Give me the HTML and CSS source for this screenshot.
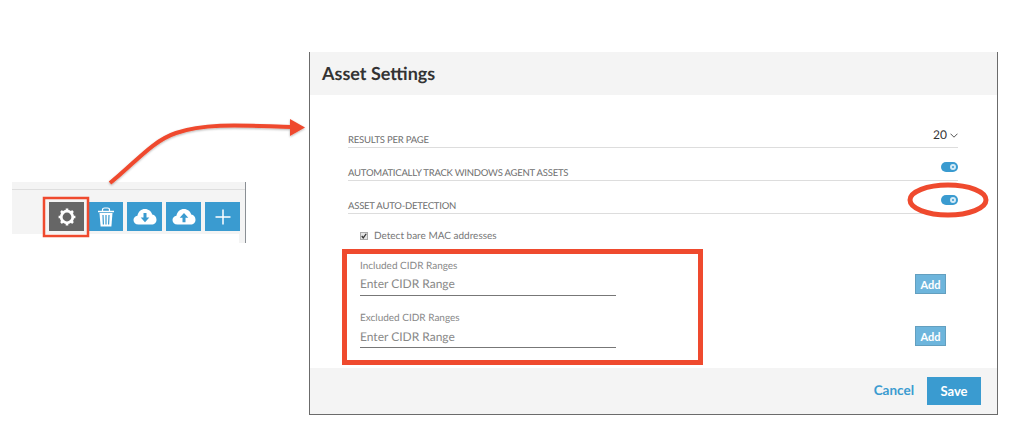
FILE: index.html
```html
<!DOCTYPE html>
<html lang="en">
<head>
    <meta charset="UTF-8">
    <title>Asset Settings</title>
    <link rel="stylesheet" href="styles.css">
</head>
<body>
    <div class="toolbar-crop">
        <div class="toolbar-top"></div>
        <div class="toolbar">
            <button class="tool tool-active">
                <svg width="20" height="20" viewBox="0 0 20 20">
                    <circle cx="10" cy="10" r="5.8" fill="none" stroke="#fff" stroke-width="2.8"/>
                    <path d="M10 1.6v3M10 15.4v3M1.6 10h3M15.4 10h3M4 4l2.100 2.100M13.900 13.900L16 16M4 16l2.100-2.100M13.900 6.100L16 4" stroke="#fff" stroke-width="2.6"/>
                </svg>
            </button>
            <button class="tool">
                <svg width="18" height="20" viewBox="0 0 18 20">
                    <path d="M1 4.5h16" stroke="#fff" stroke-width="1.5"/>
                    <path d="M5.5 4V2.800C5.500 1.800 6.500 1 7.500 1h3c1 0 2 .8 2 1.800V4" fill="none" stroke="#fff" stroke-width="1.2"/>
                    <path d="M2.500 6h13l-1.100 13.500H3.600z" fill="#fff"/>
                    <path d="M6 8l.4 9.500M9 8v9.500M12 8l-.4 9.500" stroke="#3a9bd0" stroke-width="1.2"/>
                </svg>
            </button>
            <button class="tool">
                <svg width="24" height="17" viewBox="0 0 24 17">
                    <path d="M5.500 16.500C2.400 16.500.5 14.500.5 12c0-2.300 1.600-4 3.900-4.300C5.200 3.500 8.200 1 12 1c3.500 0 6.300 2.300 7.200 5.500 2.600.2 4.300 2.600 4.300 5.200 0 2.800-2 4.800-4.900 4.800z" fill="#fff"/>
                    <path d="M10.500 5h3v4.500h2.800L12 14.200 7.700 9.500h2.800z" fill="#3a9bd0"/>
                </svg>
            </button>
            <button class="tool">
                <svg width="24" height="17" viewBox="0 0 24 17">
                    <path d="M5.500 16.500C2.400 16.500.5 14.500.5 12c0-2.300 1.600-4 3.900-4.300C5.200 3.500 8.200 1 12 1c3.500 0 6.300 2.300 7.200 5.500 2.600.2 4.300 2.600 4.300 5.200 0 2.800-2 4.800-4.900 4.800z" fill="#fff"/>
                    <path d="M10.500 14.200h3V9.700h2.800L12 5 7.700 9.700h2.800z" fill="#3a9bd0"/>
                </svg>
            </button>
            <button class="tool">
                <svg width="16" height="16" viewBox="0 0 16 16">
                    <path d="M8 .5v15M.5 8h15" stroke="#fff" stroke-width="1.5"/>
                </svg>
            </button>
        </div>
        <div class="toolbar-under">
            <div class="under-panel"></div>
        </div>
    </div>

    <div class="modal">
        <div class="modal-header">Asset Settings</div>
        <div class="modal-body">
            <div class="setting-row">
                <span class="setting-label">Results per page</span>
                <span class="page-size">20
                    <svg width="8" height="5" viewBox="0 0 8 5"><path d="M.5.7L4 4.2 7.5.7" fill="none" stroke="#555" stroke-width="1"/></svg>
                </span>
            </div>
            <div class="setting-row">
                <span class="setting-label">Automatically track Windows agent assets</span>
                <span class="toggle"></span>
            </div>
            <div class="setting-row">
                <span class="setting-label">Asset auto-detection</span>
                <span class="toggle"></span>
            </div>
            <label class="check-row">
                <span class="check-box">
                    <svg width="8" height="8" viewBox="0 0 8 8"><path d="M1 4l2 2.5L7 1" fill="none" stroke="#333" stroke-width="1.7"/></svg>
                </span>
                Detect bare MAC addresses
            </label>
            <div class="cidr-row">
                <div class="cidr-field">
                    <div class="cidr-label">Included CIDR Ranges</div>
                    <div class="cidr-input">Enter CIDR Range</div>
                </div>
                <button class="add-btn">Add</button>
            </div>
            <div class="cidr-row">
                <div class="cidr-field">
                    <div class="cidr-label">Excluded CIDR Ranges</div>
                    <div class="cidr-input cidr-input-low">Enter CIDR Range</div>
                </div>
                <button class="add-btn">Add</button>
            </div>
        </div>
        <div class="modal-footer">
            <a class="cancel-link">Cancel</a>
            <button class="save-btn">Save</button>
        </div>
    </div>

    <!-- red callouts drawn on top of the screenshot -->
    <svg class="callouts" width="1018" height="442" viewBox="0 0 1018 442">
        <defs>
            <filter id="soft" x="-10%" y="-10%" width="120%" height="130%">
                <feDropShadow dx="0" dy="1" stdDeviation="1" flood-color="#000" flood-opacity="0.3"/>
            </filter>
        </defs>
        <g filter="url(#soft)">
            <path d="M110 183C135 163 152 141 176 133C208 122 250 126 292 127" fill="none" stroke="#ef4a2e" stroke-width="4"/>
            <path d="M290 119L305 127.5L290 136z" fill="#ef4a2e"/>
        </g>
        <rect x="44" y="198" width="44" height="38" fill="none" stroke="#ef4a2e" stroke-width="2.5"/>
        <rect x="344.5" y="251.5" width="356" height="111" fill="none" stroke="#ef4a2e" stroke-width="5"/>
        <ellipse cx="948" cy="200" rx="38" ry="15" fill="none" stroke="#ef4a2e" stroke-width="5"/>
    </svg>
</body>
</html>
```
FILE: styles.css
```css
body {
    margin: 0;
    width: 1018px;
    height: 442px;
    overflow: hidden;
    background: #fff;
    font-family: 'Lato', 'Liberation Sans', sans-serif;
    color: #333;
    text-rendering: geometricPrecision;
}

button {
    font-family: inherit;
    border: none;
    padding: 0;
}

/* left crop of the page toolbar */
.toolbar-crop {
    position: absolute;
    left: 12px;
    top: 182px;
    width: 233px;
    height: 61px;
    border-right: 1px solid #8a8f94;
    display: flex;
    flex-direction: column;
}

.toolbar-top {
    height: 7px;
    background: #f4f4f4;
    border-bottom: 1px solid #dedede;
}

.toolbar {
    height: 44px;
    background: #f4f4f4;
    box-sizing: border-box;
    padding: 12px 5px 0 0;
    display: flex;
    justify-content: flex-end;
    gap: 4px;
}

.tool {
    width: 35px;
    height: 29px;
    background: #3a9bd0;
    display: flex;
    align-items: center;
    justify-content: center;
}

.tool-active {
    background: #666;
}

.toolbar-under {
    flex: 1;
    background: #f4f4f4;
    padding-right: 6px;
}

.under-panel {
    height: 100%;
    background: #fff;
}

/* settings dialog */
.modal {
    position: absolute;
    left: 309px;
    top: 52px;
    width: 689px;
    height: 363px;
    box-sizing: border-box;
    border: 1px solid #6b6b6b;
    border-top: none;
    display: flex;
    flex-direction: column;
}

.modal-header {
    height: 43px;
    background: #f4f4f4;
    padding-left: 12px;
    font-size: 18px;
    font-weight: 700;
    line-height: 43px;
    color: #333;
}

.modal-body {
    flex: 1;
    padding: 20px 39px 0 38px;
}

.setting-row {
    height: 33px;
    box-sizing: border-box;
    border-bottom: 1px solid #ddd;
    display: flex;
    justify-content: space-between;
    align-items: flex-end;
}

.setting-label {
    font-size: 9.5px;
    letter-spacing: -0.22px;
    text-transform: uppercase;
    color: #6e6e6e;
    line-height: 12px;
}

.page-size {
    font-size: 12px;
    color: #333;
    line-height: 16px;
    margin-bottom: 4px;
    display: flex;
    align-items: center;
    gap: 3px;
}

.toggle {
    position: relative;
    width: 17px;
    height: 10px;
    margin-bottom: 8px;
    border-radius: 5px;
    background: #3a9bd0;
}

.toggle::after {
    content: "";
    position: absolute;
    right: 2px;
    top: 2px;
    width: 6px;
    height: 6px;
    box-sizing: border-box;
    border: 2px solid #d5ebf7;
    border-radius: 50%;
}

.check-row {
    display: flex;
    align-items: center;
    gap: 6px;
    margin: 15px 0 0 12px;
    height: 14px;
    font-size: 10px;
    color: #777;
}

.check-box {
    width: 8px;
    height: 8px;
    background: #e4e4e4;
    border: 1px solid #aaa;
    box-sizing: border-box;
    display: flex;
    align-items: center;
    justify-content: center;
}

.cidr-row {
    display: flex;
    justify-content: space-between;
    padding: 0 12px;
    margin-top: 16px;
}

.cidr-row + .cidr-row {
    margin-top: 15px;
}

.cidr-field {
    width: 256px;
}

.cidr-label {
    font-size: 10px;
    line-height: 14px;
    color: #888;
}

.cidr-input {
    margin-top: 1px;
    height: 22px;
    line-height: 19px;
    box-sizing: border-box;
    border-bottom: 1px solid #777;
    font-size: 12px;
    color: #888;
}

.cidr-input-low {
    line-height: 21px;
}

.add-btn {
    width: 31px;
    height: 20px;
    margin-top: 15px;
    box-sizing: border-box;
    background: #6db5dc;
    border: 1px solid #639fbf;
    color: #fff;
    font-size: 11px;
    font-weight: 700;
}

.modal-footer {
    height: 46px;
    background: #f4f4f4;
    padding: 9px 16px 0 0;
    box-sizing: border-box;
    display: flex;
    justify-content: flex-end;
    gap: 13px;
}

.cancel-link {
    font-size: 13.5px;
    font-weight: 700;
    line-height: 26px;
    color: #3a9bd0;
}

.save-btn {
    width: 54px;
    height: 28px;
    background: #3a9bd0;
    color: #fff;
    font-size: 13px;
    font-weight: 700;
}

.callouts {
    position: absolute;
    left: 0;
    top: 0;
    pointer-events: none;
}
```
